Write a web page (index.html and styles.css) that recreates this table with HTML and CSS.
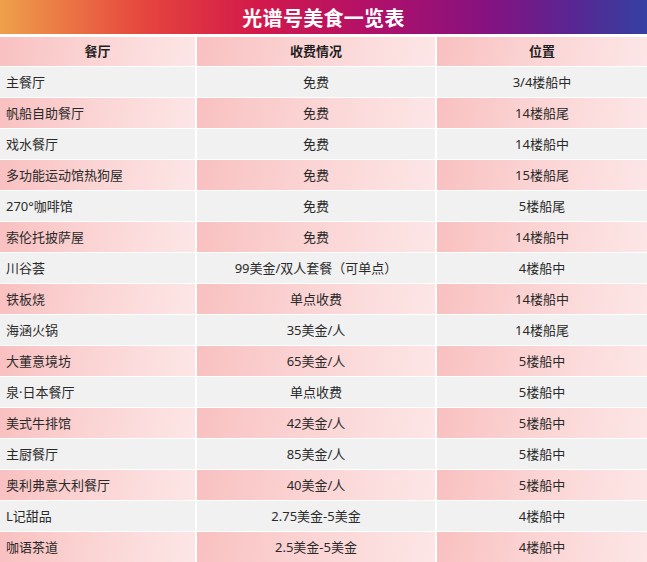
FILE: index.html
```html
<!DOCTYPE html>
<html lang="zh">
<head>
<meta charset="utf-8">
<link rel="stylesheet" href="styles.css">
</head>
<body>
<div class="page">
  <div class="title">光谱号美食一览表</div>
  <div class="table">
    <div class="row head"><div class="c1">餐厅</div><div class="c2">收费情况</div><div class="c3">位置</div></div>
    <div class="row grey"><div class="c1">主餐厅</div><div class="c2">免费</div><div class="c3">3/4楼船中</div></div>
    <div class="row pink"><div class="c1">帆船自助餐厅</div><div class="c2">免费</div><div class="c3">14楼船尾</div></div>
    <div class="row grey"><div class="c1">戏水餐厅</div><div class="c2">免费</div><div class="c3">14楼船中</div></div>
    <div class="row pink"><div class="c1">多功能运动馆热狗屋</div><div class="c2">免费</div><div class="c3">15楼船尾</div></div>
    <div class="row grey"><div class="c1">270°咖啡馆</div><div class="c2">免费</div><div class="c3">5楼船尾</div></div>
    <div class="row pink"><div class="c1">索伦托披萨屋</div><div class="c2">免费</div><div class="c3">14楼船中</div></div>
    <div class="row grey"><div class="c1">川谷荟</div><div class="c2">99美金/双人套餐（可单点）</div><div class="c3">4楼船中</div></div>
    <div class="row pink"><div class="c1">铁板烧</div><div class="c2">单点收费</div><div class="c3">14楼船中</div></div>
    <div class="row grey"><div class="c1">海涵火锅</div><div class="c2">35美金/人</div><div class="c3">14楼船尾</div></div>
    <div class="row pink"><div class="c1">大董意境坊</div><div class="c2">65美金/人</div><div class="c3">5楼船中</div></div>
    <div class="row grey"><div class="c1">泉·日本餐厅</div><div class="c2">单点收费</div><div class="c3">5楼船中</div></div>
    <div class="row pink"><div class="c1">美式牛排馆</div><div class="c2">42美金/人</div><div class="c3">5楼船中</div></div>
    <div class="row grey"><div class="c1">主厨餐厅</div><div class="c2">85美金/人</div><div class="c3">5楼船中</div></div>
    <div class="row pink"><div class="c1">奥利弗意大利餐厅</div><div class="c2">40美金/人</div><div class="c3">5楼船中</div></div>
    <div class="row grey"><div class="c1">L记甜品</div><div class="c2">2.75美金-5美金</div><div class="c3">4楼船中</div></div>
    <div class="row pink"><div class="c1">咖语茶道</div><div class="c2">2.5美金-5美金</div><div class="c3">4楼船中</div></div>
  </div>
</div>
</body>
</html>
```
FILE: styles.css
```css
html, body {
  margin: 0;
  padding: 0;
  background: #ffffff;
}
.page {
  width: 647px;
  height: 562px;
  overflow: hidden;
  font-family: "Noto Sans", "Noto Sans CJK SC", sans-serif;
  color: #2a2a2a;
}
.title {
  height: 34px;
  display: flex;
  align-items: center;
  justify-content: center;
  color: #ffffff;
  font-size: 20px;
  font-weight: 700;
  letter-spacing: 0.3px;
  background: linear-gradient(90deg, #eea04a 0%, #e6463e 22%, #d2194a 40%, #b0106a 58%, #86127f 75%, #5a2592 88%, #3540a2 100%);
}
.table {
  display: flex;
  flex-direction: column;
  gap: 1px;
  padding-top: 3px;
}
.row {
  display: grid;
  grid-template-columns: 195px 238px 1fr;
  column-gap: 2px;
  height: 30px;
  font-size: 13px;
  line-height: 30px;
}
.row > div {
  white-space: nowrap;
  overflow: hidden;
}
.c1 {
  padding-left: 6px;
}
.c2, .c3 {
  text-align: center;
}
.head {
  height: 29px;
  line-height: 29px;
  font-weight: 700;
  color: #1e1e1e;
}
.head .c1 {
  padding-left: 0;
  text-align: center;
}
.grey > div {
  background: #f1f1f1;
}
.pink > div, .head > div {
  background: linear-gradient(100deg, #f9c0c0 0%, #fbd3d3 45%, #fde6e6 100%);
}
```
